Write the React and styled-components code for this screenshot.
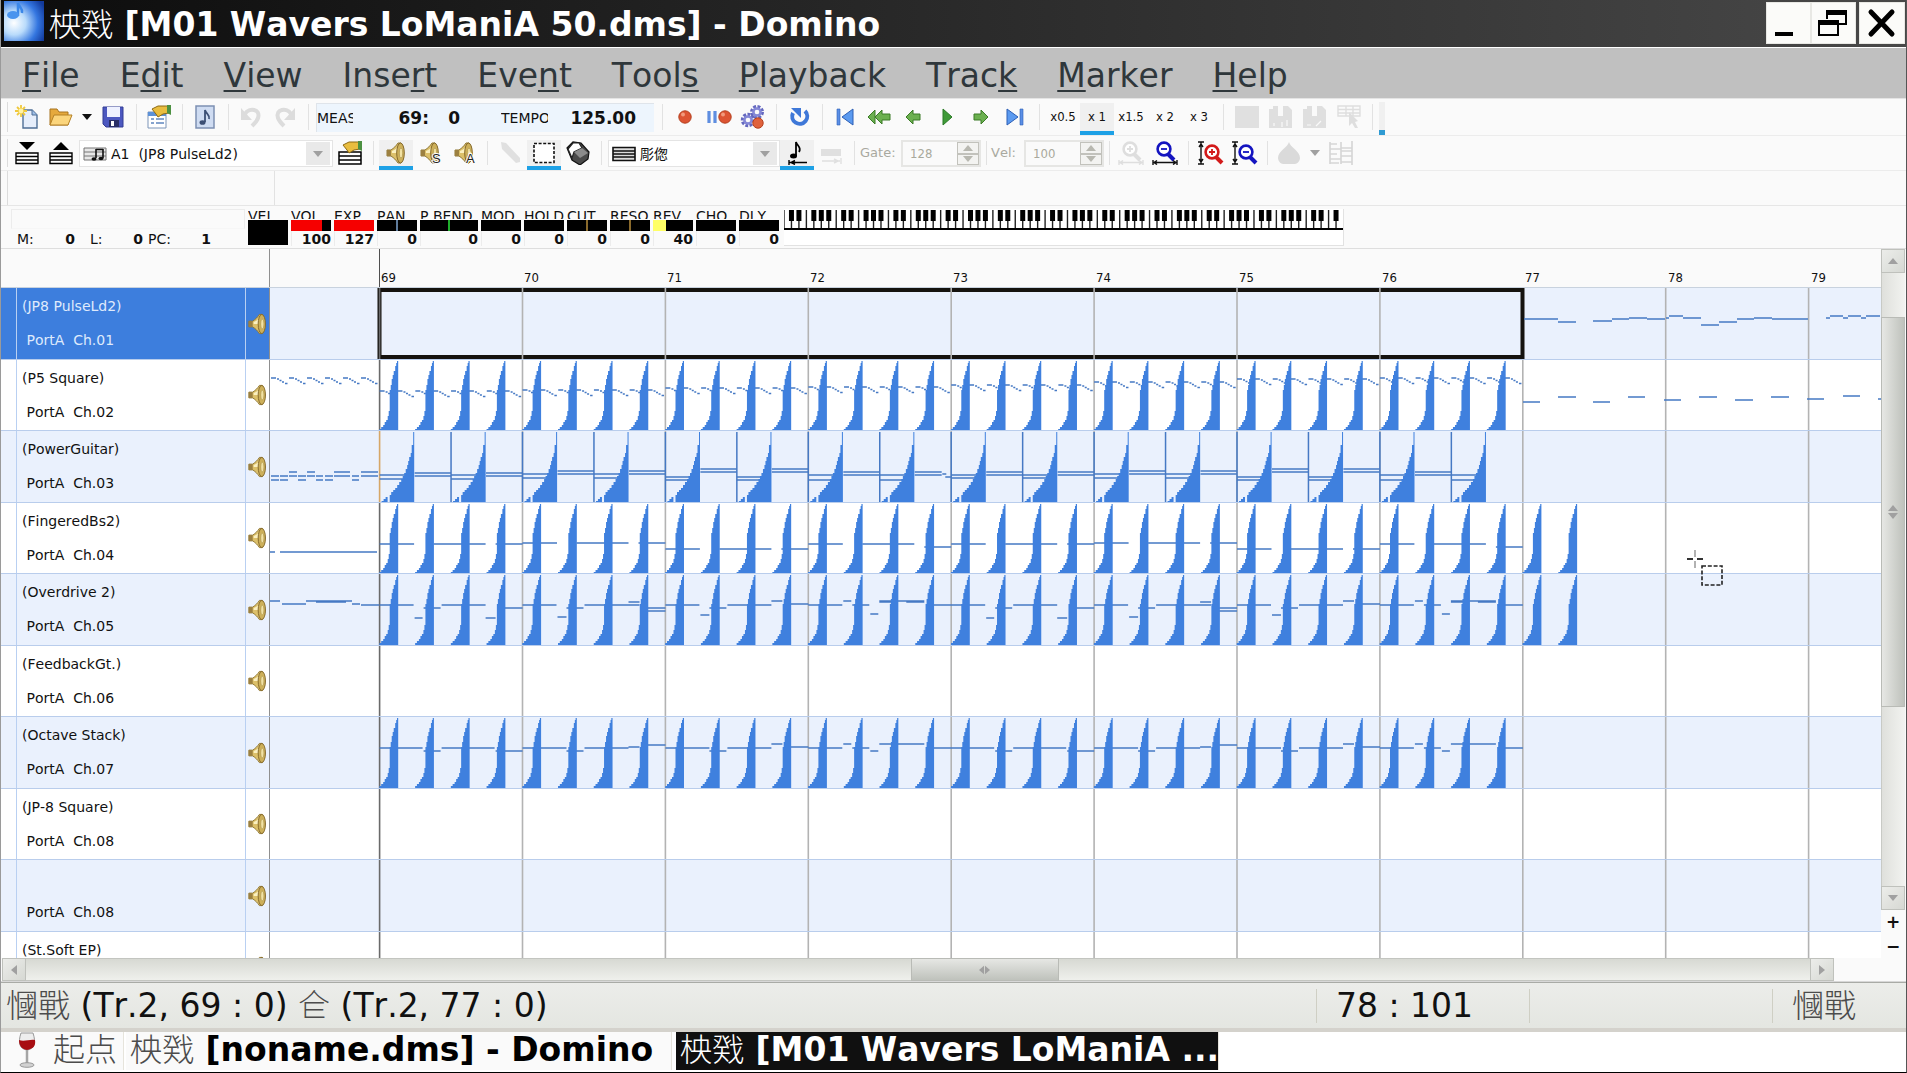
import React, { useState } from 'react';

// Styles
import styled, { createGlobalStyle } from 'styled-components';

const BLUE = '#3f80de';
const LINE = '#4679c4';
const BAR = 142.9;
const FIRST_BAR = 109.6;
const bars = [0, 1, 2, 3, 4, 5, 6, 7];

// ---------- Toolbar icons ----------

const Svg = ({ children, w = 24, h = 24, box }) => (
  <svg width={w} height={h} viewBox={box || `0 0 ${w} ${h}`} fill="none" aria-hidden="true">{children}</svg>
)

const NewIcon = () => (
  <Svg>
    <path d="M8 5h9l5 5v13H8z" fill="#e6eefb" stroke="#4f6f96" strokeWidth="1.4" />
    <path d="M17 5v5h5" fill="#9fbfe8" stroke="#4f6f96" />
    <path d="M6 0v12M0 6h12M2 2l8 8M10 2l-8 8" stroke="#f0c93c" strokeWidth="1.8" />
    <circle cx="6" cy="6" r="2.4" fill="#fff3a8" />
  </Svg>
)

const OpenIcon = () => (
  <Svg>
    <path d="M1 4h7l2 3h9v13H1z" fill="#e5a93d" stroke="#a87420" />
    <path d="M5 10h18l-4 10H1z" fill="#fbd57c" stroke="#b58127" />
  </Svg>
)

const SaveIcon = () => (
  <Svg>
    <path d="M2 2h20v20H5l-3-3z" fill="#4c58c0" stroke="#333c94" />
    <path d="M6 2h13v10H6z" fill="#eef1ff" />
    <path d="M8 15h10v7H8z" fill="#2a2f66" />
    <path d="M10 16h3v5h-3z" fill="#fff" />
  </Svg>
)

const Hand = () => (
  <>
    <path d="M5 4l6-3h11v7l-6 1-5 3-2-3z" fill="#e9bd3f" stroke="#8d6a14" />
    <path d="M20 0h4v10l-4-2z" fill="#4d9142" />
  </>
)

const PropsIcon = () => (
  <Svg>
    <path d="M1 7h18v16H1z" fill="#fff" stroke="#7d95b8" />
    <path d="M1 7h18v4H1z" fill="#5c91d8" />
    <path d="M4 14h3M4 18h3M9 14h8M9 18h8" stroke="#5f86c0" strokeWidth="1.5" />
    <Hand />
  </Svg>
)

const ScoreIcon = () => (
  <Svg>
    <path d="M3 1h18v22H3z" fill="#cfdcf2" stroke="#7d90b3" strokeWidth="1.5" />
    <path d="M12 17V5c1 4 5 4 4 9" stroke="#3c4f74" strokeWidth="1.8" />
    <ellipse cx="9.500" cy="17.500" rx="3" ry="2.300" fill="#3c4f74" />
  </Svg>
)

const UndoIcon = ({ flip }) => (
  <Svg>
    <g transform={flip ? 'translate(24 0) scale(-1 1)' : undefined}>
      <path d="M6 9c4-7 16-5 13 4-1 3-3 5-6 8" stroke="#dcdcdc" strokeWidth="4" />
      <path d="M2 3v12h11z" fill="#dcdcdc" />
    </g>
  </Svg>
)

const RecIcon = () => (
  <Svg>
    <circle cx="12" cy="12" r="6.200" fill="#dd5432" stroke="#b5401f" />
    <circle cx="10" cy="9.500" r="2" fill="#f39a7c" />
  </Svg>
)

const PauseRecIcon = () => (
  <Svg w={26} box="0 0 26 24">
    <path d="M3 6v12M9 6v12" stroke="#5f8ee0" strokeWidth="3.200" />
    <circle cx="19" cy="12" r="6.200" fill="#dd5432" stroke="#b5401f" />
    <circle cx="17" cy="9.500" r="2" fill="#f39a7c" />
  </Svg>
)

const GearRecIcon = () => (
  <Svg w={26} box="0 0 26 24">
    <circle cx="17" cy="7" r="5" stroke="#6468bf" strokeWidth="4" strokeDasharray="2.600 1.300" />
    <circle cx="17" cy="7" r="3.600" stroke="#8487d6" strokeWidth="2.500" />
    <circle cx="8" cy="15" r="5.200" stroke="#6468bf" strokeWidth="4" strokeDasharray="2.600 1.300" />
    <circle cx="8" cy="15" r="3.600" stroke="#8487d6" strokeWidth="2.500" />
    <circle cx="18" cy="18" r="5.200" fill="#e0623c" stroke="#b5401f" />
  </Svg>
)

const LoopIcon = () => (
  <Svg>
    <path d="M18 6A7.500 7.500 0 1 1 6 8" stroke="#3f78d8" strokeWidth="4" />
    <path d="M4 3h10v10z" fill="#3f78d8" />
  </Svg>
)

const EdgeIcon = ({ flip }) => (
  <Svg>
    <g transform={flip ? 'translate(24 0) scale(-1 1)' : undefined}>
      <path d="M4 4h3v16H4z" fill="#5b8fe6" stroke="#2d5fb5" strokeWidth=".6" />
      <path d="M20 4v16L9 12z" fill="#5b9af0" stroke="#2d5fb5" />
    </g>
  </Svg>
)

const ArrowIcon = ({ flip, twice }) => (
  <Svg>
    <g transform={flip ? 'translate(24 0) scale(-1 1)' : undefined} fill="#6bb04f" stroke="#3a7a26" strokeWidth="1">
      {twice
        ? <><path d="M1 12l7-7v14z" /><path d="M8 12l7-7v4h8v6h-8v4z" /></>
        : <path d="M5 12l7-7v4h7v6h-7v4z" />}
    </g>
  </Svg>
)

const PlayIcon = () => (
  <Svg><path d="M8 4l9 8-9 8z" fill="#3f9a38" stroke="#2a7a26" /></Svg>
)

const GreySquare = () => <Svg><path d="M0 1h24v22H0z" fill="#e0e0e0" /></Svg>

const GreyPaste = ({ alt }) => (
  <Svg>
    <path d="M0 4h4V1h5v10h5V1h5l4 4v18H0z" fill="#dfdfdf" />
    <path d={alt ? 'M4 20h4M13 21l5-5' : 'M5 21v-3M13 22v-5M18 21v-6'} stroke="#fafafa" strokeWidth="1.200" />
  </Svg>
)

const GreyTable = () => (
  <Svg>
    <path d="M1 1h22v10H1zM1 4.500h22M1 8h22M9 1v10M16 1v10" stroke="#dedede" strokeWidth="1.400" />
    <path d="M12 7l9 9-3 1 3 6h-3l-3-5-3 3z" fill="#dedede" />
  </Svg>
)

const StaffIcon = ({ up }) => (
  <Svg>
    <path d={up ? 'M12 1l8 8H4z' : 'M4 1h16l-8 8z'} fill="#000" />
    <path d="M1 12h22v3.500H1zM1 15.500h22V19H1zM1 19h22v3.500H1z" fill="#fff" stroke="#000" strokeWidth="1.400" />
  </Svg>
)

const StaffHandIcon = () => (
  <Svg>
    <path d="M1 11h22v4H1zM1 15h22v4H1zM1 19h22v4H1z" fill="#fff" stroke="#000" strokeWidth="1.500" />
    <Hand />
  </Svg>
)

const SmallScoreIcon = () => (
  <Svg w={24} h={16} box="0 0 24 16">
    <path d="M1 2h22v12H1zM1 6h22M1 10h22" fill="#e8e8e8" stroke="#777" strokeWidth="1" />
    <path d="M13 12V3M20 12V3M13 3.500h7" stroke="#111" strokeWidth="1.600" />
    <ellipse cx="11" cy="13" rx="2.500" ry="1.800" fill="#111" />
    <ellipse cx="18" cy="12.500" rx="2.500" ry="1.800" fill="#111" />
  </Svg>
)

const SpeakerIcon = ({ mark }) => (
  <Svg>
    <path d="M3 9h4c3-2 5-4 7-7h3v20h-3c-2-3-4-5-7-7H3z" fill="#dcc06a" stroke="#8f7632" strokeWidth="1" />
    <path d="M3 9h4v6H3z" fill="#9c8040" />
    <path d="M8 10c3-1 5-3 6-5v7H8z" fill="#fbf0c0" />
    <ellipse cx="16.500" cy="12" rx="3.800" ry="10" fill="#cdb05a" stroke="#85692a" />
    <ellipse cx="17" cy="12" rx="1.700" ry="5" fill="#f2e2a4" stroke="#a38a42" strokeWidth=".6" />
    {mark && <text x="14" y="22" fontSize="13" fontFamily="Liberation Sans, sans-serif" stroke="#fafafa" strokeWidth="2" paintOrder="stroke" fill="#222">{mark}</text>}
  </Svg>
)

const PencilIcon = () => (
  <Svg><path d="M3 1l5 1 14 15v4l-4 1L4 8z" fill="#e0e0e0" /></Svg>
)

const SelectIcon = () => (
  <Svg>
    <path d="M2 2.500h20v19H2z" fill="#fff" stroke="#111" strokeWidth="1.600" strokeDasharray="3 1.600" />
  </Svg>
)

const EraserIcon = () => (
  <Svg>
    <path d="M1 7l6-6 8 1 8 9-1 7-8 6-8-5z" fill="#4a4a4a" stroke="#111" strokeWidth="1.200" />
    <path d="M2 8l5-6h6l3 5-8 4-2 6z" fill="#fff" stroke="#222" strokeWidth="1.200" />
    <path d="M8 11l8-4 6 5-8 5z" fill="#8b8b8b" />
  </Svg>
)

const LinesIcon = () => (
  <Svg w={24} h={16} box="0 0 24 16">
    <path d="M1 1.500h22v13H1zM1 5h22M1 8h22M1 11h22" fill="#ddd" stroke="#111" strokeWidth="1.600" />
  </Svg>
)

const NoteIcon = () => (
  <Svg>
    <path d="M11 15V1c1 4 6 5 3 10" stroke="#000" strokeWidth="1.800" />
    <ellipse cx="8.500" cy="15" rx="3.500" ry="2.500" fill="#000" />
    <path d="M4 19v5M4 21.500h18M10 19.500l-4 2 4 2" stroke="#000" strokeWidth="1.400" />
  </Svg>
)

const NoteLenIcon = () => (
  <Svg>
    <path d="M2 8h20v7H2z" fill="#e0e0e0" />
    <path d="M3 20h18M15 18l4 2-4 2M22 17v6" stroke="#e0e0e0" strokeWidth="1.400" />
  </Svg>
)

const ZoomIcon = ({ color, rule, minus, vertical }) => (
  <Svg w={26} box="0 0 26 24">
    <g transform={vertical ? 'translate(4 3)' : 'translate(2 0)'}>
      <circle cx="10" cy="8" r="6.400" fill="#fff" stroke={color} strokeWidth="2.600" />
      <path d="M14 13l6 6" stroke={color} strokeWidth="4" />
      <path d={minus ? 'M7 8h6' : 'M7 8h6M10 5v6'} stroke={color} strokeWidth="1.800" />
    </g>
    {vertical
      ? <path d="M0 1h6M0 23h6M3 1v22M1 6l2-3 2 3M1 18l2 3 2-3" stroke={rule} strokeWidth="1.400" />
      : <path d="M1 19v5M25 19v5M1 21.500h24M5 19.500l-3 2 3 2M21 19.500l3 2-3 2" stroke={rule} strokeWidth="1.400" />}
  </Svg>
)

const DropIcon = () => (
  <Svg><path d="M12 1c1 5 11 9 11 16 0 3-3 6-5 6H6c-2 0-5-3-5-6C1 10 11 6 12 1z" fill="#dadada" /></Svg>
)

const GreyStaff = () => (
  <Svg>
    <path d="M1 1v22M12 1v22M23 0v24M1 3h7M1 8h11M1 13h7M1 18h11M1 22h9M12 7h11M12 10h11M12 15h11M12 21h11" stroke="#d6d6d6" strokeWidth="1.700" />
  </Svg>
)

const Caret = ({ up, color = '#a0a0a0' }) => (
  <svg width="10" height="6" viewBox="0 0 10 6" aria-hidden="true">
    <path d={up ? 'M0 6h10L5 0z' : 'M0 0h10L5 6z'} fill={color} />
  </svg>
)

const SideCaret = ({ right }) => (
  <svg width="6" height="10" viewBox="0 0 6 10" aria-hidden="true">
    <path d={right ? 'M0 0v10l6-5z' : 'M6 0v10L0 5z'} fill="#a0a0a0" />
  </svg>
)

const AppIcon = () => (
  <svg width="40" height="40" viewBox="0 0 40 40" aria-hidden="true">
    <defs>
      <radialGradient id="glow" cx="0.25" cy="0.55" r="0.85">
        <stop offset="0" stopColor="#fff" />
        <stop offset="0.35" stopColor="#b9dbfb" />
        <stop offset="0.7" stopColor="#3476e0" />
        <stop offset="1" stopColor="#123a9c" />
      </radialGradient>
    </defs>
    <path d="M0 0h40v40H0z" fill="url(#glow)" />
    <path d="M14 15V2c1 4 5 5 4 10" stroke="#3b87e8" strokeWidth="2.500" fill="none" />
    <ellipse cx="9" cy="14" rx="6" ry="4" fill="#4a94ee" />
  </svg>
)

const WineIcon = () => (
  <svg width="20" height="36" viewBox="0 0 20 36" aria-hidden="true">
    <path d="M4 1h12c3 9 2 16-6 17-8-1-9-8-6-17z" fill="#eee" stroke="#999" />
    <path d="M2 8c5 2 11-1 16 0 1 6-2 9-8 10-6-1-8-5-8-10z" fill="#a80e12" />
    <path d="M10 18v14" stroke="#a5a5a5" strokeWidth="2.500" />
    <ellipse cx="10" cy="33" rx="7" ry="2.300" fill="#d2d2d2" stroke="#999" />
  </svg>
)

// ---------- Piano ----------

const whiteKey = 7.46;
const blackSteps = [1, 2, 4, 5, 6];

const Piano = () => {
  const whites = Array.from({ length: 75 }, (_, i) => i)
  return (
    <PianoBox>
      <svg width="100%" height="21" aria-hidden="true">
        {whites.map(i => <path key={i} d={`M${i * whiteKey} 1v19`} stroke="#222" strokeWidth="1.400" />)}
        {whites.filter(i => blackSteps.includes(i % 7)).map(i => (
          <path key={i} d={`M${i * whiteKey - 2.500} 1h5v11h-5z`} fill="#000" />
        ))}
        <path d="M0 20h559" stroke="#000" strokeWidth="2" />
      </svg>
    </PianoBox>
  )
}

// ---------- Clips in the track lanes ----------

const stairs = (right, points, bottom) => {
  let d = `M${right} ${bottom}V${points[0][1]}`
  points.forEach(([x, y]) => { d += `V${y}H${right + x}` })
  return `${d}V${bottom}Z`
}

const SPIKE = [[-1.2, 1], [-2, 3], [-3, 6], [-4.5, 11], [-5.5, 15], [-6.5, 19], [-7.5, 25], [-8.5, 30], [-9.5, 51], [-10.5, 56], [-12, 60], [-13.5, 62], [-15, 65], [-17, 67], [-18.8, 69]];
const RAMP = [[-1, 1], [-2.5, 14], [-3.5, 22], [-5, 26], [-6, 30], [-7, 34], [-8.5, 38], [-10, 42], [-11.5, 45], [-13, 48], [-15, 51], [-17, 54], [-19, 57], [-21, 59], [-23, 61], [-24.5, 64]];
const RAMP_TAIL = [[0, 64], [-2, 66], [-4, 68], [-6, 70]];

const barX = (bar, x = 0) => FIRST_BAR + bar * BAR + x

const Spikes = ({ count }) => (
  <path
    fill={BLUE}
    d={Array.from({ length: count }, (_, i) => stairs(FIRST_BAR + 18.6 + i * BAR / 4, SPIKE, 71)).join('')}
  />
)

// notes: [from, to, y]
const Notes = ({ notes }) => (
  <path stroke={LINE} strokeWidth="1.500" d={notes.map(([a, b, y]) => `M${a} ${y}H${b}`).join('')} />
)

const slide = (x, y) => [[x, x + 5, y], [x + 6, x + 8, y + 1], [x + 8.5, x + 10.5, y + 2.5], [x + 11, x + 13, y + 4], [x + 14, x + 16.5, y + 5.5]]

const LANE_1 = [
  [1254, 1288, 31], [1288, 1306, 34], [1323, 1342, 33], [1342, 1359, 31], [1359, 1377, 30], [1377, 1395, 31],
  [1396, 1399, 30], [1399, 1413, 28], [1413, 1431, 30], [1431, 1449, 37], [1449, 1467, 34], [1467, 1484, 31],
  [1484, 1502, 30], [1502, 1538, 31], [1556, 1560, 30], [1560, 1573, 28], [1573, 1578, 30], [1578, 1591, 28],
  [1591, 1596, 30], [1596, 1610, 28],
];

const LANE_2 = [
  ...[0, 1, 2, 3, 4, 5].flatMap(i => slide(1 + i * 18, 18)),
  ...[31, 30, 28, 27, 25, 22, 19, 18].flatMap((y, bar) => (
    bars.flatMap(i => slide(barX(bar, i * BAR / 8), y))
  )),
  [1253, 1270, 42], [1288, 1306, 37], [1323, 1340, 42], [1358, 1375, 37], [1394, 1411, 40], [1429, 1447, 37],
  [1465, 1483, 40], [1501, 1519, 37], [1537, 1554, 39], [1573, 1590, 36], [1608, 1612, 39],
];

const POWER = [[44, 48, 42, 45], [43, 47, 40, 43], [46, 49, 38, 41], [44, 49, 41, 44], [44, 47, 41, 44], [43, 47, 40, 43], [46, 49, 38, 41], [44, 49, 41, 44]];

const LANE_3 = [
  [19, 27, 41], [37, 45, 41], [64, 80, 41], [91, 108, 41],
  [1, 9, 45], [10, 18, 45], [19, 27, 45], [28, 36, 45], [37, 45, 45], [46, 53, 45], [55, 63, 45], [64, 80, 45], [82, 89, 45], [91, 108, 45],
  [1, 9, 49], [10, 18, 49], [28, 36, 49], [46, 53, 49], [55, 63, 49], [82, 89, 49],
  ...POWER.flatMap(([a, b, c, d], bar) => [0, 71.4].flatMap(h => {
    const pre = [[barX(bar, h), barX(bar, h + 28), a], [barX(bar, h), barX(bar, h + 24), b]]
    if (bar === 7 && h) return pre
    const end = bar === 3 && h ? 62 : 71.4
    return [...pre, [barX(bar, h + 35), barX(bar, h + end), c], [barX(bar, h + 35), barX(bar, h + end), d]]
  })),
  [barX(3, 134), barX(3, 138), 43], [barX(3, 137), barX(3, 143), 46],
];

const BASS = [[41, 41], [40, 40], [46, 46], [41, 44], [41, 41], [40, 40], [46, 46], [41, 44]];

const LANE_4 = [
  [0, 5, 49], [10, 107, 49],
  ...BASS.flatMap(([y, last], bar) => [
    [barX(bar), barX(bar, 34.5), y], [barX(bar, 54), barX(bar, 106), y], [barX(bar, 116), barX(bar, BAR), last],
  ]),
];

const OVERDRIVE = [
  [[0, 34, 31], [35, 43, 44], [44, 61, 34], [62, 106, 31], [106, 116, 44], [120, 143, 34]],
  [[0, 34, 31], [35, 44, 43], [44, 61, 34], [62, 117, 31], [106, 117, 28], [124, 143, 34], [124, 143, 37]],
  [[0, 34, 31], [35, 44, 41], [44, 61, 34], [62, 106, 31], [106, 117, 27], [124, 143, 30]],
  [[0, 34, 31], [35, 43, 27], [44, 61, 31], [62, 70, 40], [71, 116, 27], [71, 88, 28], [98, 116, 28], [118, 143, 31]],
];

const LANE_5 = [
  [0, 10, 27], [12, 36, 30], [36, 82, 27], [46, 76, 28], [82, 90, 30], [91, 109, 31],
  ...bars.flatMap(bar => OVERDRIVE[bar % 4].map(([a, b, y]) => [barX(bar, a), barX(bar, b), y])),
];

const OCTAVE = [
  [[0, 43, 31], [44, 61, 34], [62, 115, 31], [116, 143, 34]],
  [[0, 44, 31], [44, 61, 34], [62, 106, 31], [106, 117, 30], [124, 143, 28]],
  [[0, 44, 31], [44, 61, 34], [62, 106, 31], [106, 117, 27], [124, 143, 30]],
  [[0, 34, 31], [35, 43, 27], [44, 61, 31], [62, 70, 34], [71, 116, 27], [118, 143, 31]],
];

const LANE_7 = bars.flatMap(bar => OCTAVE[bar % 4].map(([a, b, y]) => [barX(bar, a), barX(bar, b), y]));

const Ramps = () => {
  const starts = Array.from({ length: 16 }, (_, i) => FIRST_BAR + i * BAR / 2)
  return (
    <>
      <path fill={BLUE} d={starts.map(x => stairs(x + 34.6, RAMP, 71) + stairs(x + 8, RAMP_TAIL, 71)).join('')} />
      <path stroke={LINE} strokeWidth="1.500" d={starts.slice(1).map(x => `M${x} 1V71`).join('')} />
    </>
  )
}

const tracks = [
  { name: '(JP8 PulseLd2)', port: 'PortA  Ch.01', notes: LANE_1, selected: true },
  { name: '(P5 Square)', port: 'PortA  Ch.02', notes: LANE_2, spikes: 32 },
  { name: '(PowerGuitar)', port: 'PortA  Ch.03', notes: LANE_3, ramps: true },
  { name: '(FingeredBs2)', port: 'PortA  Ch.04', notes: LANE_4, spikes: 34 },
  { name: '(Overdrive 2)', port: 'PortA  Ch.05', notes: LANE_5, spikes: 34 },
  { name: '(FeedbackGt.)', port: 'PortA  Ch.06' },
  { name: '(Octave Stack)', port: 'PortA  Ch.07', notes: LANE_7, spikes: 32 },
  { name: '(JP-8 Square)', port: 'PortA  Ch.08' },
  { name: '', port: 'PortA  Ch.08' },
  { name: '(St.Soft EP)', port: '' },
];

const Lane = ({ track }) => {
  // the selection frame closes on bar 77, so its barline is left out there
  const lines = [1, 2, 3, 4, 5, 6, 7, 8, 9, 10].filter(i => !(track.selected && i === 8))
  return (
    <LaneSvg aria-hidden="true">
      {track.selected && <rect x="109.500" y="2" width="1143" height="67" fill="none" stroke="#15130f" strokeWidth="4" />}
      <path stroke="#b3b3b3" strokeWidth="1.600" d={lines.map(i => `M${barX(i)} 0V72`).join('')} />
      <path stroke={track.ramps ? '#d6a767' : '#6a6a6a'} strokeWidth="1.600" d={`M${FIRST_BAR} 0V72`} />
      {track.notes && <Notes notes={track.notes} />}
      {track.spikes && <Spikes count={track.spikes} />}
      {track.ramps && <Ramps />}
    </LaneSvg>
  )
}

// ---------- Data for bars ----------

const menus = [
  ['', 'F', 'ile'], ['E', 'd', 'it'], ['', 'V', 'iew'], ['Inse', 'r', 't'], ['Eve', 'n', 't'],
  ['Tool', 's', ''], ['', 'P', 'layback'], ['Trac', 'k', ''], ['', 'M', 'arker'], ['', 'H', 'elp'],
];

const controllers = [
  { name: 'VOL', value: 100, fill: 78, color: '#f60000' },
  { name: 'EXP', value: 127, fill: 100, color: '#f60000' },
  { name: 'PAN', value: 0, tick: '#5f7c9c' },
  { name: 'P.BEND', value: 0, tick: '#1fae2c', wide: true },
  { name: 'MOD', value: 0 },
  { name: 'HOLD', value: 0 },
  { name: 'CUT', value: 0, tick: '#8a6a2c' },
  { name: 'RESO', value: 0, tick: '#8a6a2c' },
  { name: 'REV', value: 40, fill: 32, color: '#ffff66' },
  { name: 'CHO', value: 0 },
  { name: 'DLY', value: 0 },
];

const speeds = ['x0.5', 'x 1', 'x1.5', 'x 2', 'x 3'];

const App = () => {
  const [speed, setSpeed] = useState('x 1')

  return (
    <>
      <GlobalStyle />
      <Screen>
        <TitleBar>
          <AppIcon />
          <Title><Thin>柍戣</Thin> [M01 Wavers LoManiA 50.dms] - Domino</Title>
          <WindowButton aria-label="Minimize">
            <Svg w={30} h={32} box="0 0 30 32"><path d="M1 25h18v4H1z" fill="#000" /></Svg>
          </WindowButton>
          <WindowButton aria-label="Restore">
            <Svg w={32} h={32} box="0 0 32 32">
              <path d="M9 4h19v13h-7M9 4v8" stroke="#000" strokeWidth="2" />
              <path d="M8 3h21v5H8zM0 13h21v5H0z" fill="#000" />
              <path d="M1 14h19v14H1z" stroke="#000" strokeWidth="2" />
            </Svg>
          </WindowButton>
          <WindowButton aria-label="Close" $close>
            <Svg w={30} h={32} box="0 0 30 32"><path d="M4 5l21 22M25 5L4 27" stroke="#000" strokeWidth="5" strokeLinecap="round" /></Svg>
          </WindowButton>
        </TitleBar>

        <MenuBar>
          {menus.map(([a, key, b]) => <MenuItem key={a + key + b}>{a}<u>{key}</u>{b}</MenuItem>)}
        </MenuBar>

        <Toolbar $h={37}>
          <Tool aria-label="New"><NewIcon /></Tool>
          <Tool aria-label="Open"><OpenIcon /></Tool>
          <Tool aria-label="Recent files" $w={18}><Caret color="#111" /></Tool>
          <Tool aria-label="Save"><SaveIcon /></Tool>
          <Separator />
          <Tool aria-label="Properties"><PropsIcon /></Tool>
          <Separator />
          <Tool aria-label="Score"><ScoreIcon /></Tool>
          <Separator />
          <Tool aria-label="Undo"><UndoIcon /></Tool>
          <Tool aria-label="Redo"><UndoIcon flip /></Tool>
          <Separator />
          <Readout>
            <Clipped $w={36}>MEAS</Clipped>
            <Digits $w={76}>69:</Digits>
            <Digits $w={31}>0</Digits>
            <Clipped $w={47} $left={41}>TEMPO</Clipped>
            <Digits $w={88}>125.00</Digits>
          </Readout>
          <Separator />
          <Tool aria-label="Record"><RecIcon /></Tool>
          <Tool aria-label="Record standby"><PauseRecIcon /></Tool>
          <Tool aria-label="Record settings"><GearRecIcon /></Tool>
          <Separator />
          <Tool aria-label="Loop"><LoopIcon /></Tool>
          <Separator />
          <Tool aria-label="To start"><EdgeIcon /></Tool>
          <Tool aria-label="Rewind"><ArrowIcon twice /></Tool>
          <Tool aria-label="Previous measure"><ArrowIcon /></Tool>
          <Tool aria-label="Play"><PlayIcon /></Tool>
          <Tool aria-label="Next measure"><ArrowIcon flip /></Tool>
          <Tool aria-label="To end"><EdgeIcon flip /></Tool>
          <Separator $w={14} />
          {speeds.map(s => (
            <Tool key={s} $active={s === speed} onClick={() => setSpeed(s)}>{s}</Tool>
          ))}
          <Separator $w={14} />
          <Tool aria-label="Cut" disabled><GreySquare /></Tool>
          <Tool aria-label="Copy" disabled><GreyPaste /></Tool>
          <Tool aria-label="Paste" disabled><GreyPaste alt /></Tool>
          <Tool aria-label="Delete" disabled><GreyTable /></Tool>
          <Separator />
          <EndStrip />
        </Toolbar>

        <Toolbar $h={35}>
          <Tool aria-label="Next track"><StaffIcon /></Tool>
          <Tool aria-label="Previous track"><StaffIcon up /></Tool>
          <ComboBox $w={254}>
            <SmallScoreIcon />
            <select aria-label="Track"><option>A1&nbsp; (JP8 PulseLd2)</option></select>
            <DropButton><Caret /></DropButton>
          </ComboBox>
          <Tool aria-label="Track properties"><StaffHandIcon /></Tool>
          <Separator />
          <Tool aria-label="Sound" $active><SpeakerIcon /></Tool>
          <Tool aria-label="Solo"><SpeakerIcon mark="S" /></Tool>
          <Tool aria-label="All"><SpeakerIcon mark="A" /></Tool>
          <Separator />
          <Tool aria-label="Pencil" disabled><PencilIcon /></Tool>
          <Tool aria-label="Select" $active><SelectIcon /></Tool>
          <Tool aria-label="Eraser"><EraserIcon /></Tool>
          <Separator />
          <ComboBox $w={172}>
            <LinesIcon />
            <select aria-label="Grid"><option>彫偬</option></select>
            <DropButton><Caret /></DropButton>
          </ComboBox>
          <Tool aria-label="Note start" $active><NoteIcon /></Tool>
          <Tool aria-label="Note length" disabled><NoteLenIcon /></Tool>
          <Separator />
          <FieldLabel htmlFor="gate" $w={41}>Gate:</FieldLabel>
          <NumberBox>
            <input id="gate" defaultValue="128" disabled />
            <Spinner>
              <button aria-label="Gate up" disabled><Caret up color="#b8b8b0" /></button>
              <button aria-label="Gate down" disabled><Caret color="#b8b8b0" /></button>
            </Spinner>
          </NumberBox>
          <Separator $w={10} />
          <FieldLabel htmlFor="vel" $w={33}>Vel:</FieldLabel>
          <NumberBox>
            <input id="vel" defaultValue="100" disabled />
            <Spinner>
              <button aria-label="Velocity up" disabled><Caret up color="#b8b8b0" /></button>
              <button aria-label="Velocity down" disabled><Caret color="#b8b8b0" /></button>
            </Spinner>
          </NumberBox>
          <Separator $w={10} />
          <Tool aria-label="Zoom in" disabled><ZoomIcon color="#dedede" rule="#dedede" /></Tool>
          <Tool aria-label="Zoom out"><ZoomIcon color="#1414c0" rule="#111" minus /></Tool>
          <Separator />
          <Tool aria-label="Zoom in vertically"><ZoomIcon color="#d31a1a" rule="#111" vertical /></Tool>
          <Tool aria-label="Zoom out vertically"><ZoomIcon color="#1414c0" rule="#111" minus vertical /></Tool>
          <Separator $w={10} />
          <Tool aria-label="Colour" disabled><DropIcon /></Tool>
          <Tool aria-label="Colour list" disabled $w={18}><Caret /></Tool>
          <Tool aria-label="Event list" disabled><GreyStaff /></Tool>
        </Toolbar>

        <EmptyBar><div /></EmptyBar>

        <MixerBar>
          <Program>
            <ProgramName />
            <ProgramValues>
              <ProgramField $w={58}>M:<b>0</b></ProgramField>
              <ProgramField $w={53}>L:<b>0</b></ProgramField>
              <ProgramField $w={63}>PC:<b>1</b></ProgramField>
            </ProgramValues>
          </Program>
          <Meter>
            <MeterName>VEL</MeterName>
            <VelocityBlock />
          </Meter>
          {controllers.map(c => (
            <Meter key={c.name} $wide={c.wide}>
              <MeterName>{c.name}</MeterName>
              <MeterBar $fill={c.fill} $color={c.color}>{c.tick && <Tick $color={c.tick} />}</MeterBar>
              <MeterValue>{c.value}</MeterValue>
            </Meter>
          ))}
          <Piano />
        </MixerBar>

        <Workspace>
          <TrackPane>
            <Ruler>
              <RulerSide />
              <RulerLead />
              {[69, 70, 71, 72, 73, 74, 75, 76, 77, 78, 79].map(n => <Measure key={n}>{n}</Measure>)}
            </Ruler>
            <TrackList>
              {tracks.map((track, i) => (
                <TrackRow key={i}>
                  <TrackLabel $selected={track.selected}>
                    <Gutter />
                    <TrackText>
                      <span>{track.name}</span>
                      <span>{' '}{track.port}</span>
                    </TrackText>
                    <Mute aria-label="Mute"><SpeakerIcon /></Mute>
                  </TrackLabel>
                  <Lane track={track} />
                </TrackRow>
              ))}
            </TrackList>
            <Pointer width="40" height="40" viewBox="0 0 40 40" aria-hidden="true">
              <path d="M8 0v7M8 11v7" stroke="#999" strokeWidth="1.500" />
              <path d="M0 9h6M10 9h6" stroke="#333" strokeWidth="1.800" />
              <path d="M15 16h20v19H15z" fill="none" stroke="#222" strokeWidth="1.600" strokeDasharray="4 1.800" />
            </Pointer>
          </TrackPane>
          <VScroll>
            <ScrollButton aria-label="Scroll up"><Caret up /></ScrollButton>
            <VTrough $grow={44} />
            <VThumb><Caret up /><Caret /></VThumb>
            <VTrough $grow={180} />
            <ScrollButton aria-label="Scroll down"><Caret /></ScrollButton>
            <ScaleButton>+</ScaleButton>
            <ScaleButton>−</ScaleButton>
          </VScroll>
        </Workspace>

        <HScroll>
          <ScrollButton aria-label="Scroll left"><SideCaret /></ScrollButton>
          <HTrough $grow={885} />
          <HThumb><SideCaret /><SideCaret right /></HThumb>
          <HTrough $grow={751} />
          <ScrollButton aria-label="Scroll right"><SideCaret right /></ScrollButton>
        </HScroll>

        <StatusBar>
          <StatusMain><Faint>慖戰</Faint> (Tr.2, 69 : 0) <Faint>仺</Faint> (Tr.2, 77 : 0)</StatusMain>
          <StatusCell $w={213}>78 : 101</StatusCell>
          <StatusCell $w={243} />
          <StatusCell $w={134}><Faint>慖戰</Faint></StatusCell>
        </StatusBar>

        <TaskBar>
          <StartButton><WineIcon /><Faint>起点</Faint></StartButton>
          <TaskButton $w={546}><Faint>柍戣</Faint> [noname.dms] - Domino</TaskButton>
          <TaskButton $w={543} $active><Thin>柍戣</Thin> [M01 Wavers LoManiA ...</TaskButton>
        </TaskBar>
      </Screen>
    </>
  )
}

const GlobalStyle = createGlobalStyle`
  * {
    box-sizing: border-box;
  }
  body {
    margin: 0;
    background: #fff;
  }
  button, input, select {
    margin: 0;
    padding: 0;
    border: 0;
    background: none;
    font: inherit;
    color: inherit;
  }
`;

const Screen = styled.div`
  height: 100vh;
  display: flex;
  flex-direction: column;
  overflow: hidden;
  font: 14px/18px "DejaVu Sans", "Noto Sans CJK SC", sans-serif;
  font-kerning: none;
  color: #111;
  background: #fafafa;
  border-left: 1px solid #9a9a9a;
  border-right: 1px solid #555;
  border-bottom: 1px solid #000;
`;

const TitleBar = styled.header`
  flex: none;
  height: 48px;
  display: flex;
  align-items: flex-start;
  padding: 1px 1px 0 3px;
  background: linear-gradient(90deg, #0c0c0c, #484848);
  border-bottom: 1px solid #fff;
`;

const Title = styled.h1`
  flex: 1;
  margin: 0 0 0 5px;
  font-size: 33px;
  line-height: 48px;
  color: #fff;
  white-space: nowrap;
`;

const Thin = styled.span`
  font-size: 32px;
  font-weight: 300;
`;

const Faint = styled(Thin)`
  color: #4c4c4c;
`;

const WindowButton = styled.button`
  width: ${({ $close }) => $close ? '46px' : '45px'};
  height: 42px;
  margin: 1px 0 0 ${({ $close }) => $close ? '3px' : '0'};
  display: flex;
  align-items: center;
  justify-content: center;
  background: #fbfbf9;
  border: 1px solid #e8e8e4;
`;

const MenuBar = styled.nav`
  flex: none;
  height: 51px;
  display: flex;
  align-items: center;
  gap: 40px;
  padding: 5px 0 0 21px;
  background: #c0c0c0;
  border-bottom: 1px solid #e4e4e4;
`;

const MenuItem = styled.button`
  font-size: 33px;
  line-height: 46px;
  color: #2f373b;
  u {
    text-decoration-thickness: 2px;
    text-underline-offset: 3px;
  }
`;

const Toolbar = styled.div`
  flex: none;
  height: ${({ $h }) => $h}px;
  display: flex;
  align-items: stretch;
  padding-left: 8px;
  border-bottom: 1px solid #ececec;
  &::before {
    content: '';
    width: 1px;
    margin: 3px 2px 3px -2px;
    background: #dcdcdc;
  }
`;

const Tool = styled.button`
  flex: none;
  width: ${({ $w }) => $w || 34}px;
  display: flex;
  align-items: center;
  justify-content: center;
  font-size: 13px;
  font-family: "DejaVu Sans Condensed", "DejaVu Sans", sans-serif;
  white-space: nowrap;
  background: ${({ $active }) => $active ? '#f0f0f0' : 'none'};
  border-top: 4px solid transparent;
  border-bottom: 4px solid ${({ $active }) => $active ? '#1ea1e6' : 'transparent'};
  background-clip: padding-box;
`;

const Separator = styled.div`
  flex: none;
  width: ${({ $w }) => $w || 12}px;
  margin: 5px 0;
  background: linear-gradient(#e2e2e2, #e2e2e2) center / 1px 100% no-repeat;
`;

const Readout = styled.div`
  flex: none;
  width: 338px;
  margin: 4px 2px 3px;
  display: flex;
  align-items: center;
  background: #edf5fd;
  border-top: 1px solid #dfe4ea;
  border-left: 1px solid #dfe4ea;
`;

const Clipped = styled.span`
  width: ${({ $w }) => $w}px;
  margin-left: ${({ $left }) => $left || 0}px;
  overflow: hidden;
`;

const Digits = styled.span`
  width: ${({ $w }) => $w}px;
  text-align: right;
  font-size: 17px;
  font-weight: bold;
`;

const EndStrip = styled.div`
  width: 6px;
  margin: 3px 0 0 1px;
  background: #f0f0f0;
  border-bottom: 5px solid #2f9bd3;
`;

const ComboBox = styled.div`
  flex: none;
  width: ${({ $w }) => $w}px;
  margin: 4px 0 3px 1px;
  padding: 1px 2px 1px 3px;
  display: flex;
  align-items: center;
  gap: 4px;
  background: #fff;
  border: 1px solid #e4e4e4;
  select {
    flex: 1;
    min-width: 0;
    appearance: none;
    font-size: 14px;
    opacity: 1;
  }
`;

const DropButton = styled.span`
  width: 24px;
  align-self: stretch;
  display: flex;
  align-items: center;
  justify-content: center;
  background: #e9e9e9;
`;

const FieldLabel = styled.label`
  flex: none;
  width: ${({ $w }) => $w}px;
  align-self: center;
  font-size: 13px;
  color: #a9a9a0;
`;

const NumberBox = styled.div`
  flex: none;
  width: 80px;
  margin: 4px 0 3px;
  display: flex;
  border: 2px solid #e6e6e4;
  input {
    flex: 1;
    min-width: 0;
    padding-left: 7px;
    font-size: 13px;
    font-family: "DejaVu Sans Condensed", "DejaVu Sans", sans-serif;
    color: #a9a99c;
  }
`;

const Spinner = styled.div`
  width: 22px;
  display: flex;
  flex-direction: column;
  button {
    flex: 1;
    display: flex;
    align-items: center;
    justify-content: center;
    border: 1px solid #c2c2bc;
    background: #f3f3f1;
  }
`;

const EmptyBar = styled.div`
  flex: none;
  height: 35px;
  display: flex;
  padding-left: 6px;
  border-bottom: 1px solid #e6e6e6;
  div {
    width: 268px;
    border-left: 1px solid #dcdcdc;
    border-right: 1px solid #e2e2e2;
  }
`;

const MixerBar = styled.div`
  flex: none;
  height: 43px;
  display: flex;
  gap: 3px;
  padding: 3px 0 2px 10px;
  border-bottom: 1px solid #dedede;
`;

const Program = styled.div`
  flex: none;
  width: 234px;
`;

const ProgramName = styled.div`
  height: 20px;
  border: 1px solid #ececec;
  border-bottom-color: #f6f6f6;
`;

const ProgramValues = styled.div`
  display: flex;
  gap: 15px;
  padding-left: 6px;
  line-height: 20px;
`;

const ProgramField = styled.span`
  width: ${({ $w }) => $w}px;
  display: flex;
  justify-content: space-between;
  &:nth-child(3) {
    margin-left: -10px;
  }
`;

const Meter = styled.div`
  flex: none;
  width: ${({ $wide }) => $wide ? 58 : 40}px;
`;

const MeterName = styled.div`
  height: 10px;
  margin-bottom: 1px;
  line-height: 14px;
  overflow: hidden;
  white-space: nowrap;
`;

const MeterBar = styled.div`
  height: 11px;
  display: flex;
  justify-content: center;
  background: linear-gradient(90deg, ${({ $color }) => $color || '#000'} ${({ $fill }) => $fill || 0}%, #000 ${({ $fill }) => $fill || 0}%);
`;

const Tick = styled.span`
  width: 2px;
  background: ${({ $color }) => $color};
`;

const MeterValue = styled.div`
  height: 15px;
  line-height: 16px;
  font-weight: bold;
  text-align: right;
  border-left: 1px solid #ececec;
`;

const VelocityBlock = styled.div`
  height: 25px;
  background: #000;
`;

const PianoBox = styled.div`
  flex: none;
  width: 560px;
  margin-left: 2px;
  background: #fff;
  border-right: 1px solid #e2e2e2;
  border-bottom: 1px solid #e2e2e2;
  svg {
    display: block;
  }
`;

const Workspace = styled.main`
  flex: 1;
  min-height: 0;
  display: flex;
`;

const TrackPane = styled.section`
  flex: 1;
  min-width: 0;
  position: relative;
  display: flex;
  flex-direction: column;
  overflow: hidden;
`;

const Ruler = styled.div`
  flex: none;
  height: 39px;
  display: flex;
  align-items: flex-end;
  overflow: hidden;
  border-bottom: 1px solid #c8d2de;
`;

const RulerSide = styled.div`
  flex: none;
  width: 269px;
  align-self: stretch;
  border-right: 1px solid #8f8f8f;
`;

const RulerLead = styled.div`
  flex: none;
  width: 110px;
  align-self: stretch;
  border-right: 1px solid #4f4f4f;
`;

const Measure = styled.span`
  flex: none;
  width: 143px;
  padding-left: 1px;
  font: 13px/18px "DejaVu Sans Condensed", "DejaVu Sans", sans-serif;
`;

const TrackList = styled.div`
  flex: 1;
  min-height: 0;
  overflow: hidden;
`;

const TrackRow = styled.div`
  height: 72px;
  display: flex;
  background: #fff;
  border-bottom: 1px solid #b9cdec;
  &:nth-child(odd) {
    background: #eaf1fd;
  }
  &:nth-child(even) {
    height: 71px;
  }
`;

const TrackLabel = styled.div`
  flex: none;
  width: 269px;
  display: flex;
  border-right: 1px solid #8f8f8f;
  color: ${({ $selected }) => $selected ? '#dfeafc' : '#111'};
  background: ${({ $selected }) => $selected ? '#3d7edd' : 'none'};
`;

const Gutter = styled.div`
  width: 16px;
  border-right: 1px solid #b9d0f2;
`;

const TrackText = styled.div`
  flex: 1;
  padding: 1px 0 0 5px;
  border-right: 1px solid #b9d0f2;
  span {
    display: block;
    height: 34px;
    line-height: 34px;
    white-space: pre;
  }
`;

const Mute = styled.button`
  width: 23px;
  display: flex;
  align-items: center;
  justify-content: center;
`;

const LaneSvg = styled.svg`
  flex: 1;
  min-width: 0;
  height: 100%;
  overflow: hidden;
`;

const Pointer = styled.svg`
  position: absolute;
  left: 1686px;
  top: 301px;
`;

const VScroll = styled.div`
  flex: none;
  width: 24px;
  display: flex;
  flex-direction: column;
  align-items: stretch;
  margin-right: 1px;
`;

const ScrollButton = styled.button`
  flex: none;
  min-width: 24px;
  height: 24px;
  display: flex;
  align-items: center;
  justify-content: center;
  background: linear-gradient(135deg, #ecedea, #d6d8d3);
  border: 1px solid #bfc1bc;
`;

const VTrough = styled.div`
  flex: ${({ $grow }) => $grow} 1 0;
  background: linear-gradient(90deg, #dfe0dc, #f2f3f0);
  border-left: 1px solid #c8cac5;
`;

const VThumb = styled.div`
  flex: 391 1 0;
  display: flex;
  flex-direction: column;
  align-items: center;
  justify-content: center;
  gap: 2px;
  background: linear-gradient(90deg, #e6e7e4, #bfc2bc);
  border: 1px solid #b9bbb6;
`;

const ScaleButton = styled.button`
  flex: none;
  height: 24px;
  font-size: 17px;
  font-weight: bold;
  line-height: 22px;
`;

const HScroll = styled.div`
  flex: none;
  height: 24px;
  display: flex;
  padding: 0 72px 0 1px;
  border-bottom: 1px solid #d8d8d8;
  ${ScrollButton} {
    height: 23px;
  }
`;

const HTrough = styled.div`
  flex: ${({ $grow }) => $grow} 1 0;
  background: linear-gradient(#d7d9d3, #eff0ec);
  border-top: 1px solid #c3c5c0;
  border-bottom: 1px solid #c3c5c0;
`;

const HThumb = styled.div`
  flex: 147 1 0;
  display: flex;
  align-items: center;
  justify-content: center;
  gap: 1px;
  background: linear-gradient(#e6e7e4, #bfc2bc);
  border: 1px solid #b9bbb6;
  svg {
    width: 5px;
  }
`;

const StatusBar = styled.footer`
  flex: none;
  height: 50px;
  display: flex;
  align-items: center;
  background: linear-gradient(#ecedea, #e4e6e1);
  border-top: 1px solid #a9aba6;
  border-bottom: 4px solid #d4d2cc;
  font-size: 33px;
  line-height: 40px;
`;

const StatusMain = styled.div`
  flex: 1;
  padding-left: 5px;
  white-space: nowrap;
`;

const StatusCell = styled.div`
  flex: none;
  width: ${({ $w }) => $w}px;
  height: 34px;
  line-height: 34px;
  padding-left: 19px;
  border-left: 1px solid #cfcfc4;
  white-space: nowrap;
`;

const TaskBar = styled.div`
  flex: none;
  height: 40px;
  display: flex;
  align-items: flex-start;
  background: #fff;
`;

const StartButton = styled.button`
  width: 123px;
  height: 38px;
  display: flex;
  align-items: center;
  gap: 16px;
  padding: 0 0 3px 16px;
  line-height: 34px;
  background: #fafafa;
  border-right: 1px solid #e6e4dc;
`;

const TaskButton = styled.button`
  width: ${({ $w }) => $w}px;
  height: 38px;
  margin-left: ${({ $active }) => $active ? 4 : 2}px;
  padding: 0 0 3px 4px;
  overflow: hidden;
  font-size: 33px;
  line-height: 34px;
  font-weight: bold;
  text-align: left;
  white-space: nowrap;
  color: ${({ $active }) => $active ? '#fff' : '#000'};
  background: ${({ $active }) => $active ? '#101010' : '#fafafa'};
  border-right: 1px solid #e6e4dc;
`;

export default App
